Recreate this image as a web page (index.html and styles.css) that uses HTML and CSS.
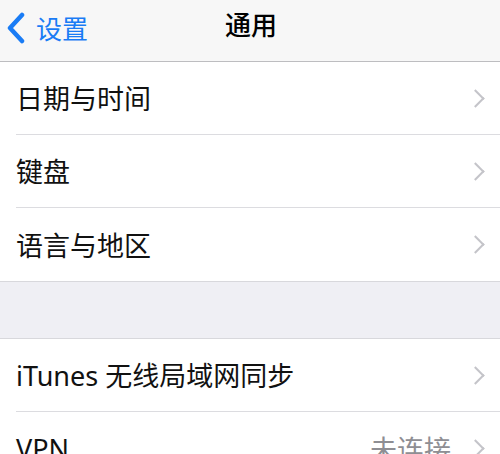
FILE: index.html
```html
<!DOCTYPE html>
<html lang="zh-CN">
<head>
  <meta charset="UTF-8">
  <meta name="viewport" content="width=device-width, initial-scale=1.0">
  <title>通用</title>
<link rel="stylesheet" href="styles.css">
</head>
<body>

<div class="nav_bar">
  <a class="back_btn" href="#">
    <svg class="back_icon" viewBox="0 0 20 32" width="20" height="32">
      <path d="M16 3 L4 16 L16 29" fill="none" stroke="#1a7cf5" stroke-width="4.5" stroke-linecap="round" stroke-linejoin="round"/>
    </svg>
    <span>设置</span>
  </a>
  <h1 class="nav_title">通用</h1>
</div>

<div class="group">
  <div class="cell">
    <span class="cell_label">日期与时间</span>
    <span class="chevron"></span>
  </div>
  <div class="cell">
    <span class="cell_label">键盘</span>
    <span class="chevron"></span>
  </div>
  <div class="cell">
    <span class="cell_label">语言与地区</span>
    <span class="chevron"></span>
  </div>
</div>

<div class="group_gap"></div>

<div class="group">
  <div class="cell">
    <span class="cell_label">iTunes 无线局域网同步</span>
    <span class="chevron"></span>
  </div>
  <div class="cell">
    <span class="cell_label">VPN</span>
    <span class="cell_value">未连接</span>
    <span class="chevron"></span>
  </div>
</div>

</body>
</html>
```
FILE: styles.css
```css
*{
    padding: 0;
    margin: 0;
    box-sizing: border-box;
    font-family: 'Noto Sans', 'Noto Sans CJK SC', sans-serif;
}
body{
    background: #efeff4;
    overflow: hidden;
}

.nav_bar{
    height: 62px;
    display: flex;
    align-items: center;
    justify-content: center;
    position: relative;
    background: #f7f7f7;
    border-bottom: 1px solid #bdbdc0;
}
.back_btn{
    position: absolute;
    left: 6px;
    top: 9px;
    display: flex;
    align-items: center;
    color: #1a7cf5;
    text-decoration: none;
    font-size: 26px;
}
.back_icon{
    margin-right: 10px;
}
.nav_title{
    font-size: 26px;
    font-weight: 500;
    color: #000;
    margin-left: 2px;
    margin-top: -13px;
}

/* grouped list */
.group{
    background: #ffffff;
    border-bottom: 1px solid #d8d8dc;
}
.cell{
    height: 73px;
    margin-left: 16px;
    padding-right: 16px;
    display: flex;
    align-items: center;
    border-bottom: 1px solid #dcdce0;
}
.cell:last-child{
    border-bottom: none;
}
.cell_label{
    flex: 1;
    font-size: 27px;
    color: #111;
    padding-bottom: 1px;
}
.cell_value{
    font-size: 27px;
    color: #8e8e93;
    margin-right: 18px;
}
.chevron{
    width: 13px;
    height: 13px;
    border-top: 2px solid #c4c4c9;
    border-right: 2px solid #c4c4c9;
    transform: rotate(45deg);
    margin-right: 2px;
}

.group_gap{
    height: 57px;
    border-bottom: 1px solid #d8d8dc;
}
```
